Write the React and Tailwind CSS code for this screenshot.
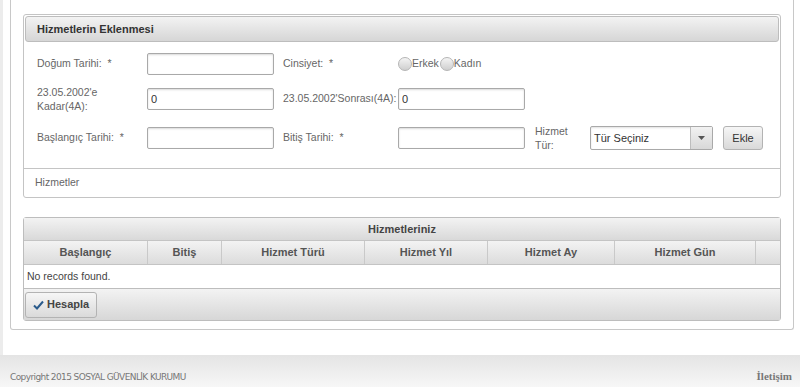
import React from "react";

const inputCls =
  "h-[22px] w-[127px] rounded-[2px] border border-[#a9a9a9] bg-white px-[3px] text-[11px] text-[#333] shadow-[inset_0_1px_2px_rgba(0,0,0,0.15)] outline-none";

function Radio({ label }) {
  return (
    <label className="flex items-center">
      <span className="h-[14px] w-[14px] rounded-full border border-[#b5b5b5] bg-gradient-to-b from-[#f4f4f4] to-[#cfcfcf]" />
      <span className="text-[10.5px] text-[#666]">{label}</span>
    </label>
  );
}

function App() {
  const columns = [
    { name: "Başlangıç", w: "w-[124px]" },
    { name: "Bitiş", w: "w-[74px]" },
    { name: "Hizmet Türü", w: "w-[143px]" },
    { name: "Hizmet Yıl", w: "w-[123px]" },
    { name: "Hizmet Ay", w: "w-[127px]" },
    { name: "Hizmet Gün", w: "w-[141px]" },
    { name: "", w: "flex-1" },
  ];

  return (
    <div className="flex h-[387px] w-[800px] flex-col overflow-hidden bg-white font-['Liberation_Sans',Arial,sans-serif]">
      {/* main area */}
      <div className="flex-1 border-l-[3px] border-[#ececec] pl-[7px] pr-[6px]">
        <div className="h-[330px] rounded-b-[3px] border-x border-b border-[#c8c8c8] px-[12px] pt-[14px]">
          {/* form panel */}
          <div className="rounded-[3px] border border-[#c4c4c4] bg-white">
            <div className="m-[1px] flex h-[26px] items-center rounded-[3px] border border-[#bdbdbd] bg-gradient-to-b from-[#f3f3f3] to-[#d6d6d6] px-[11px] text-[11px] font-bold text-[#333]">
              Hizmetlerin Eklenmesi
            </div>

            <div className="px-[13px] pb-[18px] pt-[10px] text-[10.5px] text-[#666]">
              <div className="flex h-[22px] items-center">
                <span className="w-[110px]">Doğum Tarihi:&nbsp; *</span>
                <input className={inputCls} />
                <span className="ml-[9px] w-[115px]">Cinsiyet:&nbsp; *</span>
                <div className="flex items-center gap-[1px]">
                  <Radio label="Erkek" />
                  <Radio label="Kadın" />
                </div>
              </div>

              <div className="mt-[13px] flex h-[22px] items-center">
                <span className="w-[110px] leading-[14px]">
                  23.05.2002'e
                  <br />
                  Kadar(4A):
                </span>
                <input className={inputCls} defaultValue="0" />
                <span className="ml-[9px] w-[115px] whitespace-nowrap">23.05.2002'Sonrası(4A):</span>
                <input className={inputCls} defaultValue="0" />
              </div>

              <div className="mt-[16px] flex h-[24px] items-center">
                <span className="w-[110px]">Başlangıç Tarihi:&nbsp; *</span>
                <input className={inputCls} />
                <span className="ml-[9px] w-[115px]">Bitiş Tarihi:&nbsp; *</span>
                <input className={inputCls} />
                <span className="ml-[10px] w-[55px] leading-[14px]">
                  Hizmet
                  <br />
                  Tür:
                </span>
                <div className="flex h-[24px] w-[123px] rounded-[2px] border border-[#a9a9a9] bg-white shadow-[inset_0_1px_2px_rgba(0,0,0,0.12)]">
                  <span className="flex flex-1 items-center pl-[3px] text-[11px] text-[#333]">
                    Tür Seçiniz
                  </span>
                  <span className="flex w-[22px] items-center justify-center border-l border-[#bdbdbd] bg-gradient-to-b from-[#f2f2f2] to-[#d8d8d8]">
                    <svg width="7" height="4" viewBox="0 0 7 4">
                      <path d="M0 0h7L3.5 4z" fill="#555" />
                    </svg>
                  </span>
                </div>
                <button className="ml-[10px] h-[24px] w-[40px] rounded-[3px] border border-[#b3b3b3] bg-gradient-to-b from-[#f6f6f6] to-[#d9d9d9] text-[11px] text-[#333]">
                  Ekle
                </button>
              </div>
            </div>

            <div className="flex h-[29px] items-center border-t border-[#c4c4c4] px-[11px] text-[10.5px] text-[#666]">
              Hizmetler
            </div>
          </div>

          {/* table panel */}
          <div className="mt-[19px] rounded-[3px] border border-[#bdbdbd] bg-white">
            <div className="flex h-[23px] items-center justify-center border-b border-[#c4c4c4] bg-gradient-to-b from-[#f3f3f3] to-[#d9d9d9] text-[11px] font-bold text-[#444]">
              Hizmetleriniz
            </div>
            <div className="flex h-[24px] border-b border-[#c4c4c4] bg-gradient-to-b from-[#f3f3f3] to-[#dcdcdc]">
              {columns.map((c, i) => (
                <div
                  key={i}
                  className={`${c.w} flex items-center justify-center border-r border-[#c9c9c9] text-[11px] font-bold text-[#555] last:border-r-0`}
                >
                  {c.name}
                </div>
              ))}
            </div>
            <div className="flex h-[24px] items-center border-b border-[#bdbdbd] px-[3px] text-[10.5px] text-[#444]">
              No records found.
            </div>
            <div className="flex h-[31px] items-center bg-gradient-to-b from-[#f3f3f3] to-[#d7d7d7] px-[1px]">
              <button className="flex h-[26px] w-[72px] items-center gap-[3px] rounded-[3px] border border-[#b3b3b3] bg-gradient-to-b from-[#f6f6f6] to-[#dadada] pl-[7px] text-[11px] font-bold text-[#444]">
                <svg width="11" height="10" viewBox="0 0 11 10">
                  <path d="M1 5.5l3 3L10 1.5" fill="none" stroke="#2a5b8c" strokeWidth="2" />
                </svg>
                Hesapla
              </button>
            </div>
          </div>
        </div>
      </div>

      {/* page footer */}
      <div className="flex h-[32px] items-end justify-between bg-gradient-to-b from-[#e4e4e4] to-[#f7f7f7] pb-[3px] pl-[10px] pr-[8px]">
        <span className="font-['DejaVu_Sans',Tahoma,sans-serif] text-[9px] tracking-[-0.6px] text-[#777]">
          Copyright 2015 SOSYAL GÜVENLİK KURUMU
        </span>
        <span className="font-['Liberation_Serif',serif] text-[11px] font-bold text-[#777]">
          İletişim
        </span>
      </div>
    </div>
  );
}

export default App;
